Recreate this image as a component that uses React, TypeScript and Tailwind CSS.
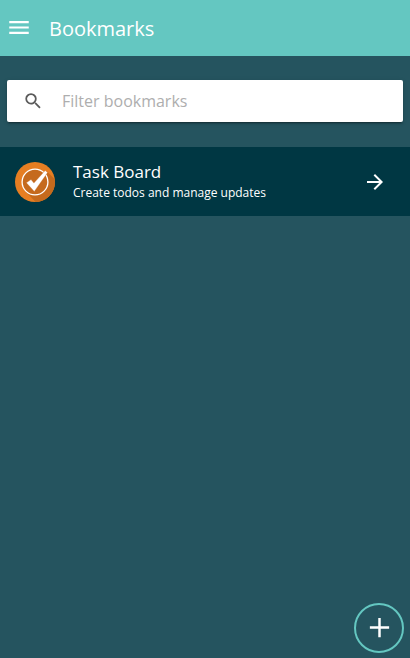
import React from "react";

function TaskLogo() {
  return (
    <svg viewBox="0 0 40 40" className="size-10 shrink-0">
      <defs>
        <clipPath id="disc">
          <circle cx="20" cy="20" r="20" />
        </clipPath>
      </defs>
      <circle cx="20" cy="20" r="20" fill="#e67e22" />
      <path clipPath="url(#disc)" d="M10.5 29.5L30 10.5L32 9.5L42 19.5V42H22.5Z" fill="#c56a1d" />
      <circle cx="20" cy="20" r="12.9" fill="#c56a1d" stroke="#fff" strokeWidth="1.3" />
      <path d="M11.4 20.8L16 17.6L18.9 21.1L30.2 8.6L32.6 10.5L19.3 29.4Z" fill="#fff" stroke="#c56a1d" strokeWidth=".3" />
    </svg>
  );
}

export default function App() {
  return (
    <div className="flex h-[658px] w-full flex-col bg-[#25545f] font-['Open_Sans','Noto_Sans',sans-serif] text-white">
      <header className="flex h-14 items-center bg-[#64c7c1] pl-[6px]">
        <button aria-label="Menu">
          <svg viewBox="0 0 24 24" className="size-[26px] -translate-y-[0.5px]" fill="currentColor">
            <path d="M3 18h18v-2H3v2zm0-5h18v-2H3v2zm0-7v2h18V6H3z" />
          </svg>
        </button>
        <h1 className="ml-[17px] pt-[2px] text-[20px] leading-7">Bookmarks</h1>
      </header>
      <main className="flex flex-1 flex-col">
        <div className="mx-[7px] mt-6 flex h-[42px] items-center rounded-[2px] bg-white pl-[16px] shadow-[0_2px_2px_rgba(0,0,0,0.14),0_3px_1px_-2px_rgba(0,0,0,0.2),0_1px_5px_rgba(0,0,0,0.12)]">
          <svg viewBox="0 0 24 24" className="mr-px mb-px size-[21px] shrink-0 -translate-x-[0.3px] translate-y-[0.5px]" fill="#5b5b5b">
            <path d="M15.5 14h-.79l-.28-.27A6.471 6.471 0 0 0 16 9.5 6.5 6.5 0 1 0 9.5 16c1.61 0 3.09-.59 4.23-1.57l.27.28v.79l5 4.99L20.49 19l-4.99-5zm-6 0C7.01 14 5 11.99 5 9.5S7.01 5 9.5 5 14 7.01 14 9.5 11.99 14 9.5 14z" />
          </svg>
          <input
            placeholder="Filter bookmarks"
            className="ml-[17px] min-w-0 flex-1 bg-transparent text-[16px] leading-6 text-gray-800 outline-none placeholder:text-[#aeaeae]"
          />
        </div>
        <a className="mt-[25px] flex h-[69px] items-center bg-[#003743] pr-[23px] pl-[15px]">
          <TaskLogo />
          <div className="ml-[18px] flex-1">
            <div className="pb-[2px] text-[17px] leading-[20px]">Task Board</div>
            <div className="text-[12px] leading-[18px]">Create todos and manage updates</div>
          </div>
          <svg viewBox="0 0 24 24" className="size-6" fill="currentColor">
            <path d="M12 4l-1.41 1.41L16.17 11H4v2h12.17l-5.58 5.59L12 20l8-8z" />
          </svg>
        </a>
        <button
          aria-label="Add bookmark"
          className="mt-auto mr-[6px] mb-[5px] flex size-[50px] items-center justify-center self-end rounded-full border-2 border-[#64c7c1]"
        >
          <svg viewBox="0 0 24 24" className="mb-px size-[33px] shrink-0" fill="currentColor">
            <path d="M19 12.9h-6.1v6.1h-1.8v-6.1H5v-1.8h6.1V5h1.8v6.1H19z" />
          </svg>
        </button>
      </main>
    </div>
  );
}
